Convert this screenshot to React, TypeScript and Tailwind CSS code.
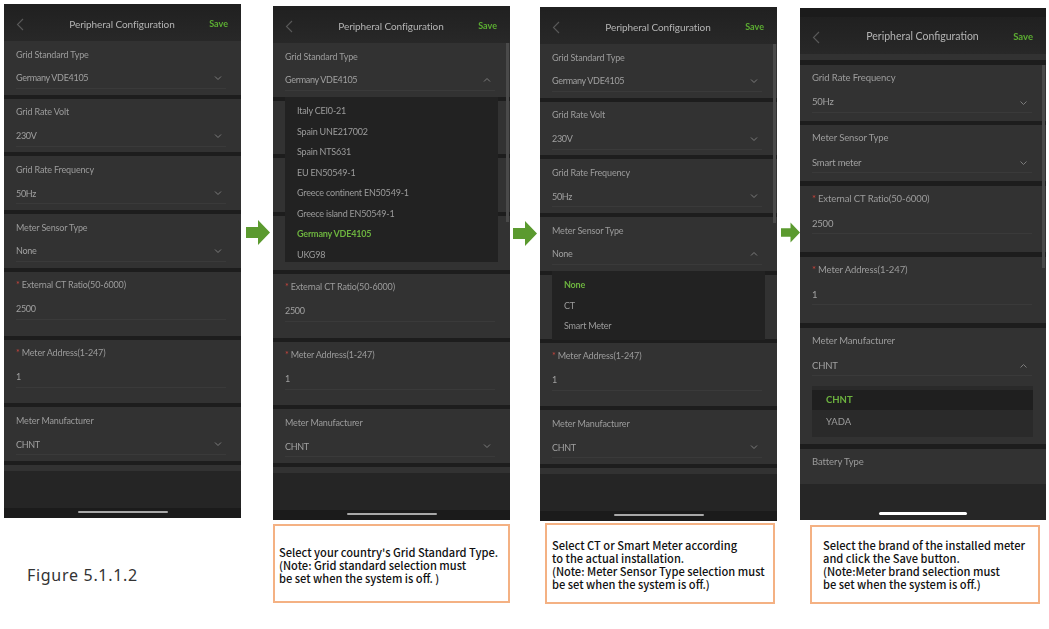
import type { ReactNode } from 'react';

const phoneFont = "font-['Lato','Liberation_Sans',sans-serif]";

const Chevron = ({ up = false, big = false }: { up?: boolean; big?: boolean }) => (
  <svg width={big ? 9 : 8} height="6" viewBox="0 0 8 6" className="shrink-0" fill="none">
    <path
      d={up ? 'M1 4.5 L4 1.5 L7 4.5' : 'M1 1.5 L4 4.5 L7 1.5'}
      stroke="#7c7c7c"
      strokeWidth="1"
    />
  </svg>
);

const Arrow = () => (
  <svg width="24" height="25" viewBox="0 0 24 25">
    <polygon points="0,7 12,7 12,0 24,12.5 12,25 12,18 0,18" fill="#5b9a2f" />
  </svg>
);

type FieldProps = {
  label?: string;
  value?: string;
  required?: boolean;
  select?: boolean;
  open?: boolean;
  height: string;
  big?: boolean;
  children?: ReactNode;
};

const Field = ({ label, value, required, select = true, open, height, big, children }: FieldProps) => (
  <section className={`shrink-0 bg-[#323232] ${height} ${big ? 'pl-[12px] pr-[14px] pt-[6px]' : 'pl-[12px] pr-[15px] pt-[7.5px]'}`}>
    {label && (
      <div className={`${big ? 'h-[13px] leading-[13px] text-[9.5px] tracking-[-0.1px]' : 'h-[12px] leading-[12px] text-[9px] tracking-[-0.15px]'} text-[#9c9c9c] whitespace-nowrap`}>
        {required && <span className="text-[#c8443c] mr-[2px]">*</span>}
        {label}
      </div>
    )}
    {value && (
      <div
        className={`flex items-center justify-between border-b border-[#3a3a3a] text-[#a0a0a0] ${
          big ? 'mt-[10px] h-[19px] text-[9.5px] tracking-[-0.2px]' : 'mt-[7.5px] h-[21px] text-[9px] tracking-[-0.3px]'
        }`}
      >
        <span>{value}</span>
        {select && (
          <span className="mr-[4px]">
            <Chevron up={open} big={big} />
          </span>
        )}
      </div>
    )}
    {children}
  </section>
);

const Header = ({ big }: { big?: boolean }) => (
  <header className="grid h-[37px] shrink-0 grid-cols-[1fr_auto_1fr] items-center bg-gradient-to-b from-[#202020] to-[#282828] pl-[12px] pr-[13px] pt-[3px]">
    <svg width="8" height="13" viewBox="0 0 8 13" fill="none">
      <path d="M7 1 L1.5 6.5 L7 12" stroke="#5a5a5a" strokeWidth="1.1" />
    </svg>
    <span className={`${big ? 'text-[10.5px]' : 'text-[10px] tracking-[-0.07px]'} text-[#b4b4b4]`}>Peripheral Configuration</span>
    <span className={`justify-self-end ${big ? 'text-[9.5px]' : 'text-[9px]'} font-bold text-[#5cae32]`}>Save</span>
  </header>
);

const Footer = () => (
  <div className="flex flex-1 flex-col">
    <div className="h-[6px] shrink-0 bg-[#323232]" />
    <div className="flex-1 bg-[#252525]" />
    <div className="flex h-[10px] shrink-0 justify-center bg-[#1b1b1b] pt-[3px]">
      <div className="h-[2px] w-[90px] rounded-full bg-[#a8a8a8]" />
    </div>
  </div>
);

const Scrollbar = ({ pos }: { pos: string }) => (
  <div className={`absolute right-[1px] w-[3px] bg-[#4a4a4a] ${pos}`} />
);

const Dropdown = ({ items, active, pos }: { items: string[]; active: string; pos: string }) => (
  <div className={`absolute left-[12px] w-[213px] bg-[#222222] pl-[12px] pt-[4px] ${pos}`}>
    {items.map(item => (
      <div
        key={item}
        className={`h-[20.5px] leading-[20.5px] text-[9px] tracking-[-0.2px] whitespace-nowrap ${
          item === active ? 'font-bold text-[#6db33f]' : 'text-[#9c9c9c]'
        }`}
      >
        {item}
      </div>
    ))}
  </div>
);

const Caption = ({ box, lines }: { box: string; lines: string[] }) => (
  <div className={`border-2 border-[#f4b183] bg-white font-['Noto_Sans_CJK_JP','Noto_Sans',sans-serif] font-medium text-[11.1px] leading-[13px] text-[#111111] ${box}`}>
    {lines.map(line => (
      <div key={line} className="whitespace-nowrap">{line}</div>
    ))}
  </div>
);

const gridItems = [
  'Italy CEI0-21',
  'Spain UNE217002',
  'Spain NTS631',
  'EU EN50549-1',
  'Greece continent EN50549-1',
  'Greece island EN50549-1',
  'Germany VDE4105',
  'UKG98',
];

export default function App() {
  return (
    <div className={`flex h-[629px] w-[1049px] overflow-hidden bg-white ${phoneFont}`}>
      {/* shot 1 */}
      <div className="ml-[4px] w-[237px] shrink-0 pt-[4px]">
        <div className="flex h-[514px] flex-col gap-[4px] overflow-hidden bg-[#1d1d1d] blur-[0.3px]">
          <div className="-mb-[4px]"><Header /></div>
          <Field label="Grid Standard Type" value="Germany VDE4105" height="h-[53.7px]" />
          <Field label="Grid Rate Volt" value="230V" height="h-[53.7px]" />
          <Field label="Grid Rate Frequency" value="50Hz" height="h-[53.7px]" />
          <Field label="Meter Sensor Type" value="None" height="h-[53.7px]" />
          <Field label="External CT Ratio(50-6000)" value="2500" required select={false} height="h-[64px]" />
          <Field label="Meter Address(1-247)" value="1" required select={false} height="h-[63.5px]" />
          <Field label="Meter Manufacturer" value="CHNT" height="h-[54px]" />
          <Footer />
        </div>
        <div className="ml-[23px] mt-[45px] font-['Noto_Sans',sans-serif] text-[16px] tracking-[0.7px] text-[#333333]">
          Figure 5.1.1.2
        </div>
      </div>

      <div className="flex w-[32px] shrink-0 justify-center pt-[220px] pl-[1px]"><Arrow /></div>

      {/* shot 2: the list covers the three middle sections */}
      <div className="w-[237px] shrink-0 pt-[6px]">
        <div className="relative flex h-[514px] flex-col gap-[4px] overflow-hidden bg-[#1d1d1d] blur-[0.3px]">
          <div className="-mb-[4px]"><Header /></div>
          <Field label="Grid Standard Type" value="Germany VDE4105" open height="h-[53.7px]" />
          <Field height="h-[53.7px]" />
          <Field height="h-[53.7px]" />
          <Field height="h-[53.7px]" />
          <Field label="External CT Ratio(50-6000)" value="2500" required select={false} height="h-[64px]" />
          <Field label="Meter Address(1-247)" value="1" required select={false} height="h-[63.5px]" />
          <Field label="Meter Manufacturer" value="CHNT" height="h-[54px]" />
          <Footer />
          <Scrollbar pos="top-[37px] h-[179px]" />
          <Dropdown items={gridItems} active="Germany VDE4105" pos="top-[91px] h-[165px]" />
        </div>
        <Caption
          box="mt-[4px] h-[79px] w-[237px] pl-[4px] pt-[20px]"
          lines={["Select your country's Grid Standard Type.", '(Note: Grid standard selection must', 'be set when the system is off. )']}
        />
      </div>

      <div className="flex w-[30px] shrink-0 justify-center pt-[221px]"><Arrow /></div>

      {/* shot 3: the list covers the CT ratio section */}
      <div className="w-[237px] shrink-0 pt-[7px]">
        <div className="relative flex h-[514px] flex-col gap-[4px] overflow-hidden bg-[#1d1d1d] blur-[0.3px]">
          <div className="-mb-[4px]"><Header /></div>
          <Field label="Grid Standard Type" value="Germany VDE4105" height="h-[53.7px]" />
          <Field label="Grid Rate Volt" value="230V" height="h-[53.7px]" />
          <Field label="Grid Rate Frequency" value="50Hz" height="h-[53.7px]" />
          <Field label="Meter Sensor Type" value="None" open height="h-[53.7px]" />
          <Field height="h-[64px]" />
          <Field label="Meter Address(1-247)" value="1" required select={false} height="h-[63.5px]" />
          <Field label="Meter Manufacturer" value="CHNT" height="h-[54px]" />
          <Footer />
          <Scrollbar pos="top-[37px] h-[179px]" />
          <Dropdown items={['None', 'CT', 'Smart Meter']} active="None" pos="top-[264px] h-[69px]" />
        </div>
        <Caption
          box="ml-[5px] mt-[2px] h-[81px] w-[230px] pl-[5px] pt-[14px]"
          lines={['Select CT or Smart Meter according', 'to the actual installation.', '(Note: Meter Sensor Type selection must', 'be set when the system is off.)']}
        />
      </div>

      <div className="flex w-[23px] shrink-0 justify-start pl-[4px] pt-[220px]"><Arrow /></div>

      {/* shot 4 */}
      <div className="w-[246px] shrink-0 pt-[8px]">
        <div className="relative flex h-[512px] flex-col overflow-hidden bg-[#1d1d1d] blur-[0.3px]">
          <div className="h-[9px] shrink-0 bg-[#1b1b1b]" />
          <Header big />
          <div className="flex flex-col gap-[4.6px]">
            <div className="h-[6px] bg-[#323232]" />
            <Field big label="Grid Rate Frequency" value="50Hz" height="h-[56px]" />
            <Field big label="Meter Sensor Type" value="Smart meter" height="h-[56px]" />
            <Field big required select={false} label="External CT Ratio(50-6000)" value="2500" height="h-[66.5px]" />
            <Field big required select={false} label="Meter Address(1-247)" value="1" height="h-[66.5px]" />
            <Field big open label="Meter Manufacturer" value="CHNT" height="h-[116px]">
              <div className="mr-[-1px] mt-[10px] h-[51px] w-[221px] bg-[#2a2a2a] pt-[4px] text-[9.5px]">
                <div className="h-[20px] bg-[#1f1f1f] pl-[14px] font-bold leading-[20px] text-[#6db33f]">CHNT</div>
                <div className="h-[24px] pl-[14px] leading-[24px] text-[#9c9c9c]">YADA</div>
              </div>
            </Field>
            <Field big label="Battery Type" height="h-[35px]" />
          </div>
          <div className="flex flex-1 items-end justify-center bg-[#262626] pb-[5px]">
            <div className="h-[3px] w-[88px] rounded-full bg-white" />
          </div>
          <Scrollbar pos="top-[57px] h-[203px]" />
        </div>
        <Caption
          box="ml-[10px] mt-[5px] h-[79px] w-[230px] pl-[11px] pt-[12px]"
          lines={['Select the brand of the installed meter', 'and click the Save button.', '(Note:Meter brand selection must', 'be set when the system is off.)']}
        />
      </div>
    </div>
  );
}
